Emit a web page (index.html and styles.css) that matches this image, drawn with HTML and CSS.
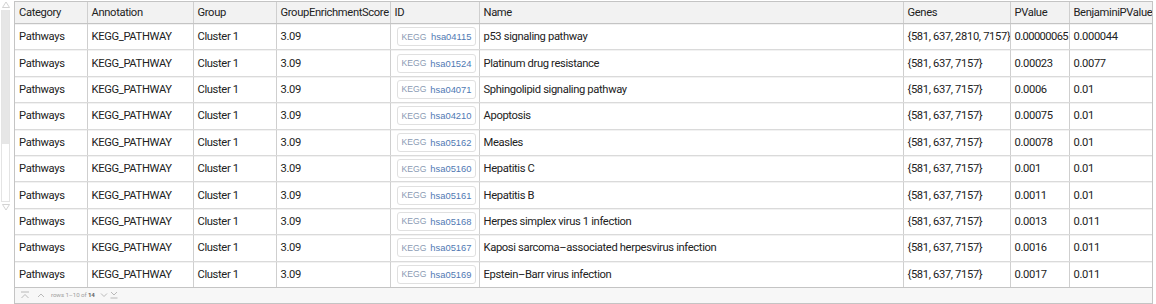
FILE: index.html
```html
<!DOCTYPE html>
<html>
<head>
<meta charset="utf-8">
<link rel="stylesheet" href="styles.css">
</head>
<body>
<div class="page">
  <div class="scroller">
    <svg class="tri" width="10" height="8" viewBox="0 0 10 8"><path d="M1.5 6.5 L5 1 L8.5 6.5 Z" fill="none" stroke="#c8c8c8" stroke-width="0.8"/></svg>
    <div class="track"><div class="thumb"></div></div>
    <svg class="tri" width="10" height="8" viewBox="0 0 10 8"><path d="M1.5 1.5 L5 7 L8.5 1.5 Z" fill="none" stroke="#c8c8c8" stroke-width="0.8"/></svg>
  </div>
  <div class="grid">
    <table class="data">
      <colgroup>
        <col class="c1"><col class="c2"><col class="c3"><col class="c4"><col class="c5"><col class="c6"><col class="c7"><col class="c8"><col class="c9">
      </colgroup>
      <thead>
        <tr><th>Category</th><th>Annotation</th><th>Group</th><th>GroupEnrichmentScore</th><th>ID</th><th>Name</th><th>Genes</th><th>PValue</th><th>BenjaminiPValue</th></tr>
      </thead>
      <tbody>
        <tr><td>Pathways</td><td>KEGG_PATHWAY</td><td>Cluster 1</td><td>3.09</td><td><span class="badge"><span class="db">KEGG</span><span class="acc">hsa04115</span></span></td><td>p53 signaling pathway</td><td>{581, 637, 2810, 7157}</td><td class="pv">0.00000065</td><td>0.000044</td></tr>
        <tr><td>Pathways</td><td>KEGG_PATHWAY</td><td>Cluster 1</td><td>3.09</td><td><span class="badge"><span class="db">KEGG</span><span class="acc">hsa01524</span></span></td><td>Platinum drug resistance</td><td>{581, 637, 7157}</td><td>0.00023</td><td>0.0077</td></tr>
        <tr><td>Pathways</td><td>KEGG_PATHWAY</td><td>Cluster 1</td><td>3.09</td><td><span class="badge"><span class="db">KEGG</span><span class="acc">hsa04071</span></span></td><td>Sphingolipid signaling pathway</td><td>{581, 637, 7157}</td><td>0.0006</td><td>0.01</td></tr>
        <tr><td>Pathways</td><td>KEGG_PATHWAY</td><td>Cluster 1</td><td>3.09</td><td><span class="badge"><span class="db">KEGG</span><span class="acc">hsa04210</span></span></td><td>Apoptosis</td><td>{581, 637, 7157}</td><td>0.00075</td><td>0.01</td></tr>
        <tr><td>Pathways</td><td>KEGG_PATHWAY</td><td>Cluster 1</td><td>3.09</td><td><span class="badge"><span class="db">KEGG</span><span class="acc">hsa05162</span></span></td><td>Measles</td><td>{581, 637, 7157}</td><td>0.00078</td><td>0.01</td></tr>
        <tr><td>Pathways</td><td>KEGG_PATHWAY</td><td>Cluster 1</td><td>3.09</td><td><span class="badge"><span class="db">KEGG</span><span class="acc">hsa05160</span></span></td><td>Hepatitis C</td><td>{581, 637, 7157}</td><td>0.001</td><td>0.01</td></tr>
        <tr><td>Pathways</td><td>KEGG_PATHWAY</td><td>Cluster 1</td><td>3.09</td><td><span class="badge"><span class="db">KEGG</span><span class="acc">hsa05161</span></span></td><td>Hepatitis B</td><td>{581, 637, 7157}</td><td>0.0011</td><td>0.01</td></tr>
        <tr><td>Pathways</td><td>KEGG_PATHWAY</td><td>Cluster 1</td><td>3.09</td><td><span class="badge"><span class="db">KEGG</span><span class="acc">hsa05168</span></span></td><td>Herpes simplex virus 1 infection</td><td>{581, 637, 7157}</td><td>0.0013</td><td>0.011</td></tr>
        <tr><td>Pathways</td><td>KEGG_PATHWAY</td><td>Cluster 1</td><td>3.09</td><td><span class="badge"><span class="db">KEGG</span><span class="acc">hsa05167</span></span></td><td>Kaposi sarcoma–associated herpesvirus infection</td><td>{581, 637, 7157}</td><td>0.0016</td><td>0.011</td></tr>
        <tr><td>Pathways</td><td>KEGG_PATHWAY</td><td>Cluster 1</td><td>3.09</td><td><span class="badge"><span class="db">KEGG</span><span class="acc">hsa05169</span></span></td><td>Epstein–Barr virus infection</td><td>{581, 637, 7157}</td><td>0.0017</td><td>0.011</td></tr>
      </tbody>
    </table>
    <div class="footer">
      <svg class="ic ic-wide" width="10" height="8" viewBox="0 0 10 8"><path d="M1 1 H9 M1.5 7 L5 3.5 L8.5 7" fill="none" stroke="#a8a8a8" stroke-width="0.8"/></svg>
      <svg class="ic" width="8" height="8" viewBox="0 0 8 8"><path d="M1 6 L4 3 L7 6" fill="none" stroke="#a8a8a8" stroke-width="0.8"/></svg>
      <span class="rows">rows 1–10 of <b>14</b></span>
      <svg class="ic" width="8" height="8" viewBox="0 0 8 8"><path d="M1 2.5 L4 5.5 L7 2.5" fill="none" stroke="#a8a8a8" stroke-width="0.8"/></svg>
      <svg class="ic" width="8" height="8" viewBox="0 0 8 8"><path d="M1 1 L4 4 L7 1 M0.5 7 H7.5" fill="none" stroke="#a8a8a8" stroke-width="0.8"/></svg>
    </div>
  </div>
</div>
</body>
</html>
```

FILE: styles.css
```css
html, body {
  margin: 0;
  padding: 0;
  background: #ffffff;
}

.page {
  display: flex;
  align-items: flex-start;
  padding-top: 1px;
}

.scroller {
  width: 11px;
  margin-right: 3px;
  display: flex;
  flex-direction: column;
  align-items: center;
}

.tri {
  display: block;
}

.track {
  width: 9px;
  height: 192px;
  margin: 1px 0 1px 0;
  border-left: 1px solid #e4e4e4;
  border-right: 1px solid #e4e4e4;
  border-bottom: 1px solid #e4e4e4;
  box-sizing: border-box;
  display: flex;
  flex-direction: column;
}

.thumb {
  height: 134px;
  background: #e6e6e6;
}

.grid {
  width: 1139px;
  border: 1px solid #c4c4c4;
  box-sizing: border-box;
  font-family: Roboto, "Open Sans", sans-serif;
  font-size: 11.2px;
  letter-spacing: -0.35px;
  color: #222222;
}

.data {
  width: 100%;
  border-collapse: collapse;
  table-layout: fixed;
}

.c1 { width: 72px; }
.c2 { width: 106px; }
.c3 { width: 83px; }
.c4 { width: 114px; }
.c5 { width: 89px; }
.c6 { width: 424px; }
.c7 { width: 107px; }
.c8 { width: 59px; }
.c9 { width: 83px; }

th, td {
  text-align: left;
  font-weight: normal;
  padding: 0 0 0 4px;
  white-space: nowrap;
  overflow: hidden;
  border-left: 1px solid #cfcfcf;
}

th:first-child, td:first-child {
  border-left: none;
}

th {
  height: 21px;
  background: #f2f2f2;
  border-bottom: 1px solid #c4c4c4;
}

td {
  height: 25.4px;
  border-bottom: 1px solid #dadada;
  box-shadow: inset 0 1px 0 #f2f2f2;
}

td.pv {
  letter-spacing: -0.6px;
}

tbody tr:last-child td {
  border-bottom: 1px solid #c4c4c4;
}

.badge {
  display: inline-flex;
  align-items: center;
  justify-content: space-between;
  height: 19px;
  box-sizing: border-box;
  padding: 0 3px 0 4px;
  width: 79px;
  margin-left: 2px;
  border: 1px solid #e0e0e0;
  border-radius: 3px;
  font-family: "Liberation Sans", Arial, sans-serif;
  letter-spacing: 0;
  vertical-align: middle;
}

.db {
  font-size: 8.6px;
  color: #8a9ab3;
}

.acc {
  font-size: 9.4px;
  color: #5079b3;
}

.footer {
  height: 15px;
  background: #f7f7f7;
  display: flex;
  align-items: center;
  padding-left: 5px;
  font-family: Roboto, sans-serif;
  font-size: 6.2px;
  letter-spacing: -0.1px;
  color: #a0a0a0;
}

.ic {
  display: block;
  margin-right: 2px;
}

.ic-wide {
  margin-right: 7px;
}

.rows {
  margin: 0 5px 0 4px;
}

.rows b {
  color: #666;
  font-weight: bold;
}
```
